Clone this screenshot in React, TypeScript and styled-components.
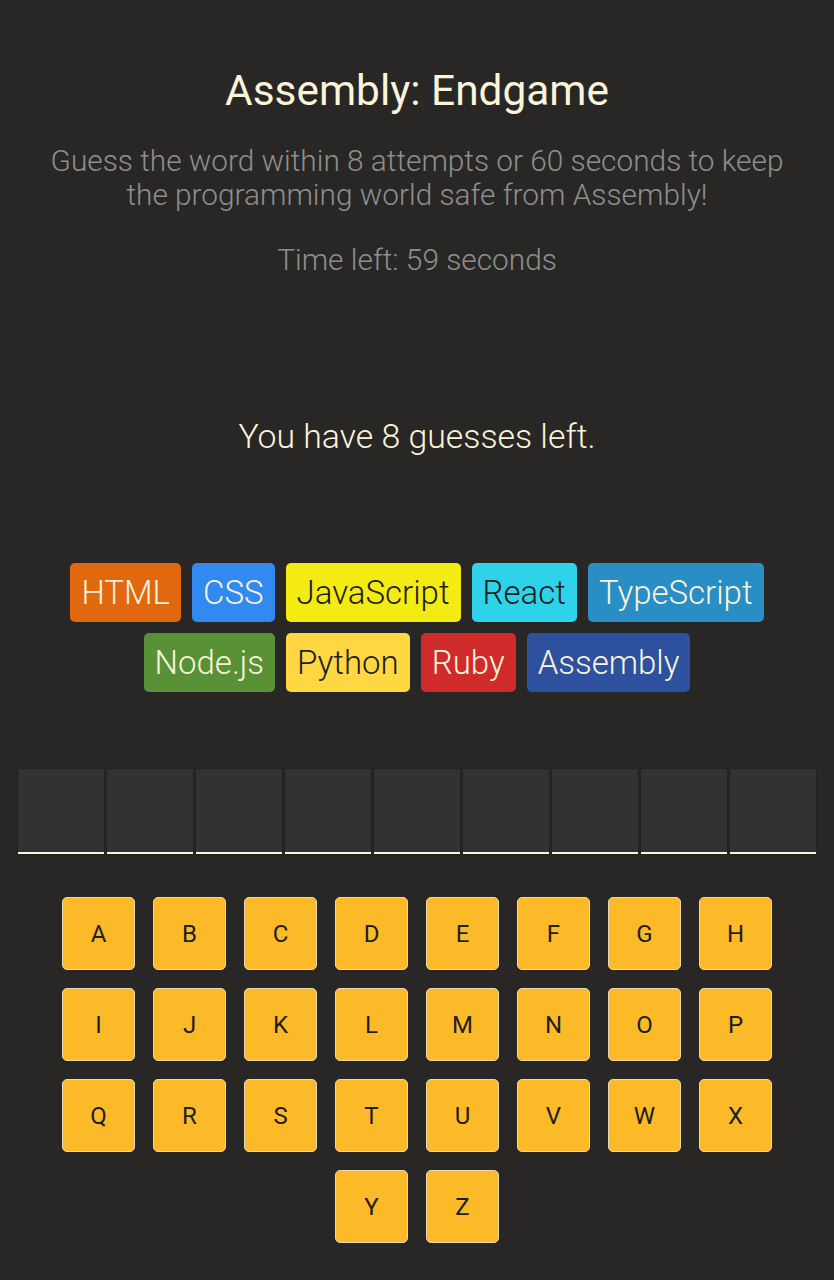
import React from "react";
import styled, { createGlobalStyle } from "styled-components";

const GlobalStyle = createGlobalStyle`
  html, body {
    margin: 0;
    padding: 0;
    background: #282726;
  }
  body {
    font-family: Roboto, "Noto Sans", sans-serif;
    color: #F9F4DA;
  }
`;

const Main = styled.main`
  min-height: 1280px;
  display: flex;
  flex-direction: column;
  align-items: center;
  padding-top: 68px;
  box-sizing: border-box;
`;

const Header = styled.header`
  display: flex;
  flex-direction: column;
  align-items: center;
  text-align: center;
`;

const Title = styled.h1`
  margin: 0;
  font-size: 42.4px;
  line-height: 46px;
  font-weight: 400;
  color: #F9F4DA;
`;

const Description = styled.p<{ $gap: number }>`
  margin: ${(p) => p.$gap}px 0 0;
  font-size: 29.8px;
  line-height: 34px;
  font-weight: 300;
  color: #8E8E8E;
  max-width: 800px;
`;

const Status = styled.section`
  margin-top: 140px;
  height: 40px;
  font-size: 33.8px;
  line-height: 40px;
  font-weight: 300;
  color: #F9F4DA;
  text-align: center;
`;

const Chips = styled.section`
  margin-top: 106px;
  display: flex;
  flex-wrap: wrap;
  justify-content: center;
  gap: 11px;
  max-width: 720px;
`;

const Chip = styled.span<{ $bg: string; $fg: string }>`
  display: inline-flex;
  align-items: center;
  height: 59px;
  padding: 0 11px;
  border-radius: 5px;
  background: ${(p) => p.$bg};
  color: ${(p) => p.$fg};
  font-size: 33px;
  font-weight: 300;
  box-sizing: border-box;
`;

const Word = styled.section`
  margin-top: 77px;
  display: flex;
  gap: 3px;
`;

const LetterBox = styled.span`
  width: 86px;
  height: 85px;
  background: #323232;
  border-bottom: 2px solid #F9F4DA;
  box-sizing: border-box;
  box-shadow: 0 0 2px rgba(0, 0, 0, 0.35);
`;

const Keyboard = styled.section`
  margin-top: 43px;
  display: flex;
  flex-wrap: wrap;
  justify-content: center;
  gap: 18px 18px;
  max-width: 712px;
`;

const Key = styled.button`
  width: 73px;
  height: 73px;
  background: #FCBA29;
  border: 1.5px solid #EAD9B0;
  border-radius: 5px;
  color: #1E1E1E;
  font-family: Roboto, "Noto Sans", sans-serif;
  font-size: 24px;
  font-weight: 400;
  padding: 0;
  box-sizing: border-box;
  cursor: pointer;
`;

const languages = [
  { name: "HTML", bg: "#E2680F", fg: "#F9F4DA" },
  { name: "CSS", bg: "#328AF1", fg: "#F9F4DA" },
  { name: "JavaScript", bg: "#F4EB13", fg: "#1E1E1E" },
  { name: "React", bg: "#2ED3E9", fg: "#1E1E1E" },
  { name: "TypeScript", bg: "#298EC6", fg: "#F9F4DA" },
  { name: "Node.js", bg: "#599137", fg: "#F9F4DA" },
  { name: "Python", bg: "#FFD742", fg: "#1E1E1E" },
  { name: "Ruby", bg: "#D02B2B", fg: "#F9F4DA" },
  { name: "Assembly", bg: "#2D519F", fg: "#F9F4DA" },
];

const alphabet = "ABCDEFGHIJKLMNOPQRSTUVWXYZ".split("");

export default function App() {
  return (
    <>
      <GlobalStyle />
      <Main>
        <Header>
          <Title>Assembly: Endgame</Title>
          <Description $gap={30}>
            Guess the word within 8 attempts or 60 seconds to keep
            <br />
            the programming world safe from Assembly!
          </Description>
          <Description $gap={31}>Time left: 59 seconds</Description>
        </Header>
        <Status>You have 8 guesses left.</Status>
        <Chips>
          {languages.map((l) => (
            <Chip key={l.name} $bg={l.bg} $fg={l.fg}>
              {l.name}
            </Chip>
          ))}
        </Chips>
        <Word>
          {Array.from({ length: 9 }).map((_, i) => (
            <LetterBox key={i} />
          ))}
        </Word>
        <Keyboard>
          {alphabet.map((ch) => (
            <Key key={ch}>{ch}</Key>
          ))}
        </Keyboard>
      </Main>
    </>
  );
}
